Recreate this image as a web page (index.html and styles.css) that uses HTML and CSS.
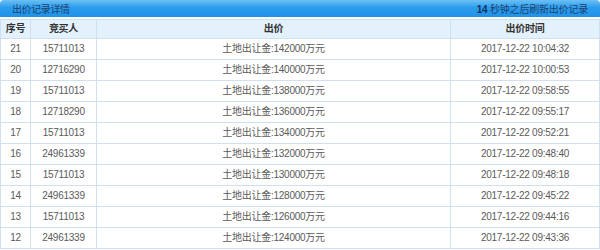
FILE: index.html
```html
<!DOCTYPE html>
<html lang="zh">
<head>
<meta charset="utf-8">
<link rel="stylesheet" href="styles.css">
</head>
<body>
<div class="panel">
  <div class="bar">
    <span class="bar-title">出价记录详情</span>
    <span class="bar-right"><b>14</b> 秒钟之后刷新出价记录</span>
  </div>
  <table class="bids">
    <colgroup>
      <col class="c1"><col class="c2"><col class="c3"><col class="c4">
    </colgroup>
    <thead>
      <tr><th>序号</th><th>竞买人</th><th>出价</th><th>出价时间</th></tr>
    </thead>
    <tbody>
      <tr><td>21</td><td>15711013</td><td>土地出让金:142000万元</td><td>2017-12-22 10:04:32</td></tr>
      <tr><td>20</td><td>12716290</td><td>土地出让金:140000万元</td><td>2017-12-22 10:00:53</td></tr>
      <tr><td>19</td><td>15711013</td><td>土地出让金:138000万元</td><td>2017-12-22 09:58:55</td></tr>
      <tr><td>18</td><td>12718290</td><td>土地出让金:136000万元</td><td>2017-12-22 09:55:17</td></tr>
      <tr><td>17</td><td>15711013</td><td>土地出让金:134000万元</td><td>2017-12-22 09:52:21</td></tr>
      <tr><td>16</td><td>24961339</td><td>土地出让金:132000万元</td><td>2017-12-22 09:48:40</td></tr>
      <tr><td>15</td><td>15711013</td><td>土地出让金:130000万元</td><td>2017-12-22 09:48:18</td></tr>
      <tr><td>14</td><td>24961339</td><td>土地出让金:128000万元</td><td>2017-12-22 09:45:22</td></tr>
      <tr><td>13</td><td>15711013</td><td>土地出让金:126000万元</td><td>2017-12-22 09:44:16</td></tr>
      <tr><td>12</td><td>24961339</td><td>土地出让金:124000万元</td><td>2017-12-22 09:43:36</td></tr>
    </tbody>
  </table>
</div>
</body>
</html>
```
FILE: styles.css
```css
html, body {
  margin: 0;
  padding: 0;
  background: #ffffff;
}
body {
  font-family: "Liberation Sans", "Noto Sans CJK SC", sans-serif;
  font-size: 10px;
  color: #555;
}
.panel {
  width: 600px;
}
.bar {
  height: 17px;
  display: flex;
  align-items: center;
  justify-content: space-between;
  padding: 0 12px;
  background: linear-gradient(#6cc0f3, #2b9ced 45%, #1e93e8);
  border-radius: 4px 4px 0 0;
  color: #1d4270;
  font-size: 10px;
  margin-bottom: 2px;
}
.bar-title {
  letter-spacing: -0.4px;
}
.bar-right {
  letter-spacing: -0.2px;
}
.bar-right b {
  font-weight: bold;
  color: #14305a;
}
.bids {
  width: 599px;
  border-collapse: collapse;
  table-layout: fixed;
}
.c1 { width: 30px; }
.c2 { width: 66px; }
.c3 { width: 354px; }
.c4 { width: 149px; }
.bids th, .bids td {
  border: 1px solid #cfe0f2;
  padding: 0;
  text-align: center;
  letter-spacing: -0.25px;
}
.bids th {
  height: 18px;
  line-height: 18px;
  background: #e3f1fc;
  color: #333;
  font-weight: bold;
}
.bids td {
  height: 20px;
  line-height: 20px;
  background: #fff;
  color: #5a5a5a;
}
```
